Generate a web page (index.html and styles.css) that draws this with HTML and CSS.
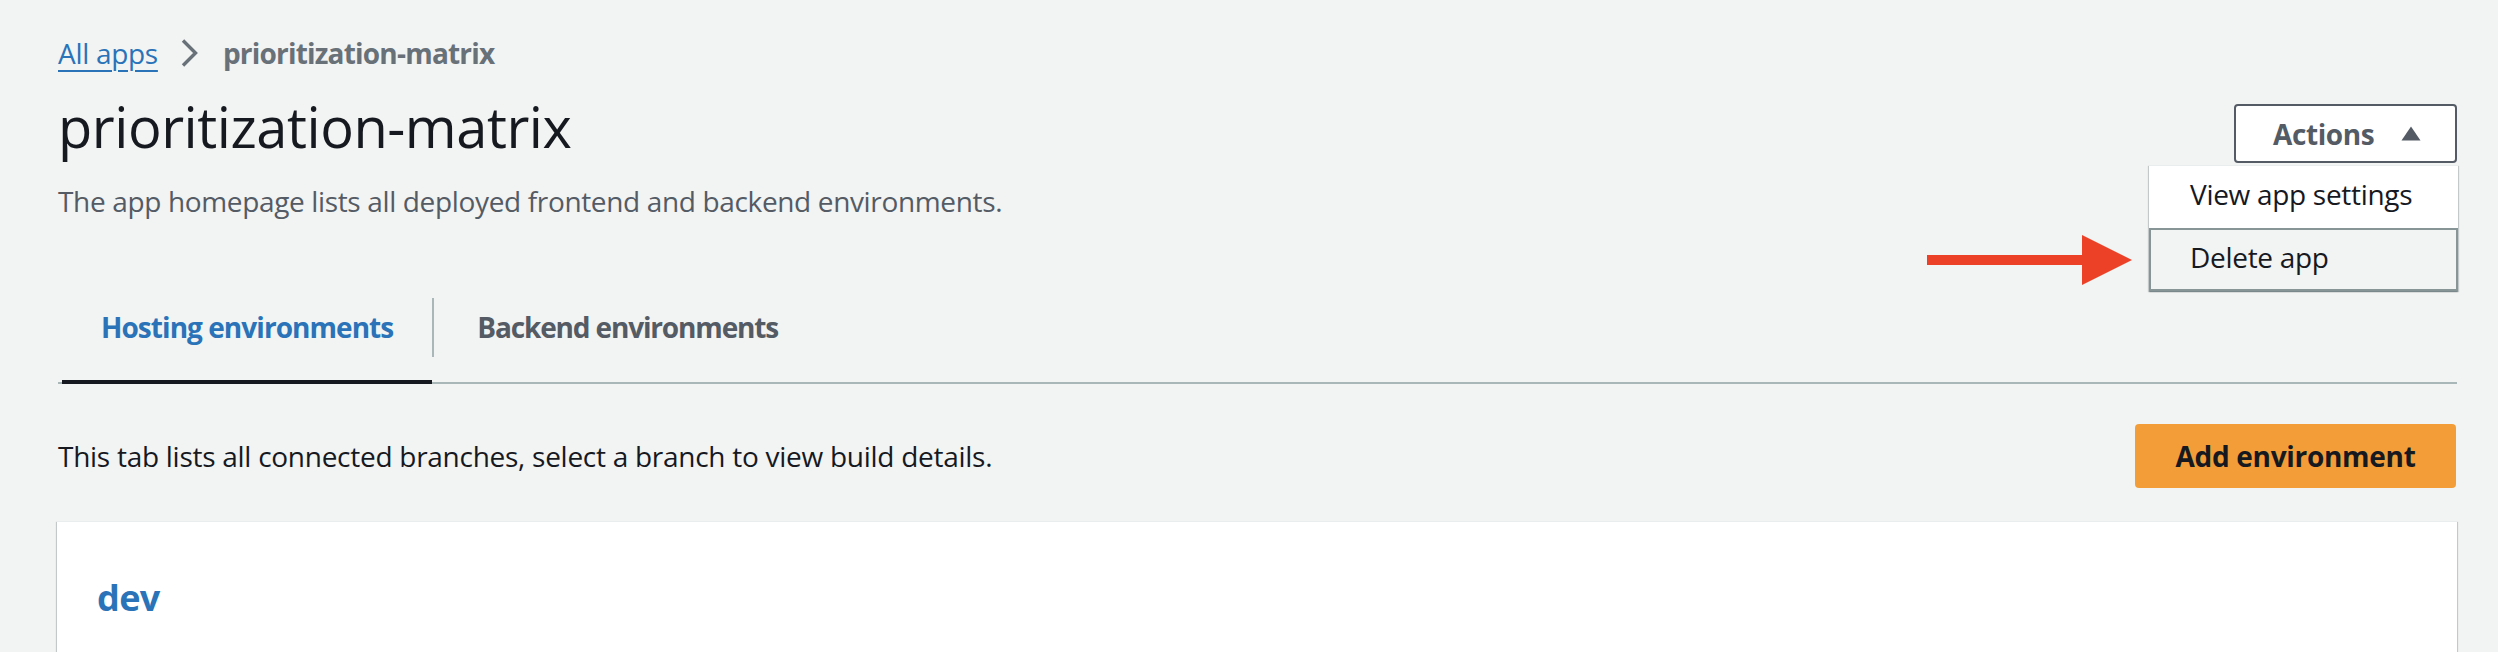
FILE: index.html
```html
<!DOCTYPE html>
<html lang="en">
<head>
<meta charset="utf-8">
<title>prioritization-matrix</title>
<link rel="stylesheet" href="styles.css">
</head>
<body>
<div class="page">
  <nav class="breadcrumbs">
    <a class="crumb-link" href="#">All apps</a>
    <svg class="crumb-sep" width="17" height="28" viewBox="0 0 17 28"><polyline points="2,1.5 14.5,14 2,26.5" fill="none" stroke="#687078" stroke-width="3.4"/></svg>
    <span class="crumb-current">prioritization-matrix</span>
  </nav>

  <header class="header">
    <div class="title-block">
      <h1 class="title">prioritization-matrix</h1>
      <p class="desc">The app homepage lists all deployed frontend and backend environments.</p>
    </div>
    <div class="actions">
      <button class="actions-btn">Actions <svg class="caret" width="20" height="15" viewBox="0 0 20 15"><polygon points="10,0.5 19.5,14.5 0.5,14.5" fill="#545b64"/></svg></button>
      <ul class="menu">
        <li class="menu-item">View app settings</li>
        <li class="menu-item menu-item-hover">Delete app</li>
      </ul>
      <svg class="annot-arrow" width="205" height="50" viewBox="0 0 205 50"><rect x="0" y="20" width="157" height="10" fill="#ec4027"/><polygon points="155,0 205,25 155,50" fill="#ec4027"/></svg>
    </div>
  </header>

  <div class="tabs">
    <div class="tab tab-active">Hosting environments</div>
    <span class="tab-sep"></span>
    <div class="tab">Backend environments</div>
  </div>

  <div class="info-row">
    <p class="info">This tab lists all connected branches, select a branch to view build details.</p>
    <button class="primary-btn">Add environment</button>
  </div>

  <section class="card">
    <h2 class="card-title">dev</h2>
  </section>
</div>
</body>
</html>
```

FILE: styles.css
```css
* { box-sizing: border-box; }
html, body { margin: 0; padding: 0; }
body {
  background: #f2f3f3;
  font-family: "Open Sans", "Noto Sans", sans-serif;
  color: #16191f;
  overflow: hidden;
}
.page {
  padding: 33px 41px 0 58px;
}
.breadcrumbs {
  display: flex;
  align-items: center;
  height: 40px;
  font-size: 28px;
  line-height: 40px;
}
.crumb-link {
  color: #2a73b8;
  text-decoration: underline;
  text-decoration-thickness: 2px;
  text-underline-offset: 6px;
  letter-spacing: -0.3px;
}
.crumb-sep { margin: 0 25px 0 23px; }
.crumb-current {
  color: #687078;
  font-weight: 700;
  letter-spacing: -0.8px;
}
.header {
  display: flex;
  justify-content: space-between;
  align-items: flex-start;
  margin-top: 17px;
}
.title {
  margin: 0;
  font-size: 56px;
  line-height: 72px;
  font-weight: 400;
  letter-spacing: -0.45px;
  color: #16191f;
}
.desc {
  margin: 19px 0 0;
  font-size: 28px;
  line-height: 40px;
  letter-spacing: -0.35px;
  color: #545b64;
}
.actions {
  position: relative;
  margin-top: 14px;
}
.actions-btn {
  display: flex;
  align-items: center;
  width: 223px;
  height: 59px;
  padding: 0 0 0 37px;
  background: #fff;
  border: 2px solid #545b64;
  border-radius: 4px;
  font-family: inherit;
  font-size: 28px;
  font-weight: 700;
  letter-spacing: -0.4px;
  color: #545b64;
}
.caret { margin-left: 27px; }
.menu {
  position: absolute;
  top: 61px;
  right: -1px;
  width: 309px;
  margin: 0;
  padding: 0;
  list-style: none;
  background: #fff;
  box-shadow: 0 1px 1px 0 rgba(0,28,36,.3), 1px 1px 1px 0 rgba(0,28,36,.15), -1px 1px 1px 0 rgba(0,28,36,.15);
  border-top: 1px solid #eaeded;
}
.menu-item {
  height: 62px;
  padding: 0 0 6px 39px;
  font-size: 28px;
  line-height: 52px;
  letter-spacing: -0.3px;
  color: #16191f;
  border: 2px solid transparent;
}
.menu-item-hover {
  height: 63px;
  padding: 0 0 4px 39px;
  line-height: 55px;
  background: #f2f3f3;
  border-color: #879596;
}
.annot-arrow {
  position: absolute;
  left: -307px;
  top: 131px;
}
.tabs {
  display: flex;
  align-items: flex-start;
  margin-top: 69px;
  border-bottom: 2px solid #aab7b8;
}
.tab {
  padding: 17px 39px 33px;
  font-size: 28px;
  line-height: 40px;
  font-weight: 700;
  letter-spacing: -0.95px;
  color: #545b64;
  border-bottom: 4px solid transparent;
  margin-bottom: -2px;
}
.tab-active {
  margin-left: 4px;
  color: #2a73b8;
  border-bottom-color: #16191f;
}
.tab-sep {
  width: 2px;
  height: 59px;
  margin-top: 8px;
  background: #aab7b8;
}
.tab-sep + .tab { padding-left: 43px; letter-spacing: -1.15px; }
.info-row {
  display: flex;
  justify-content: space-between;
  align-items: center;
  margin-top: 40px;
}
.info {
  margin: 0;
  font-size: 28px;
  line-height: 40px;
  letter-spacing: -0.27px;
  color: #16191f;
}
.primary-btn {
  width: 321px;
  height: 64px;
  margin-right: 1px;
  border: none;
  border-radius: 4px;
  background: #f29d38;
  font-family: inherit;
  font-size: 28px;
  font-weight: 700;
  letter-spacing: -0.3px;
  color: #16191f;
}
.card {
  margin: 33px 0 0 -1px;
  height: 220px;
  padding: 52px 40px 0;
  background: #fff;
  border-top: 1px solid #eaeded;
  box-shadow: 0 1px 1px 0 rgba(0,28,36,.3), 1px 1px 1px 0 rgba(0,28,36,.15), -1px 1px 1px 0 rgba(0,28,36,.15);
}
.card-title {
  margin: 0;
  font-size: 36px;
  line-height: 48px;
  font-weight: 700;
  letter-spacing: -0.6px;
  color: #2a73b8;
}
```
